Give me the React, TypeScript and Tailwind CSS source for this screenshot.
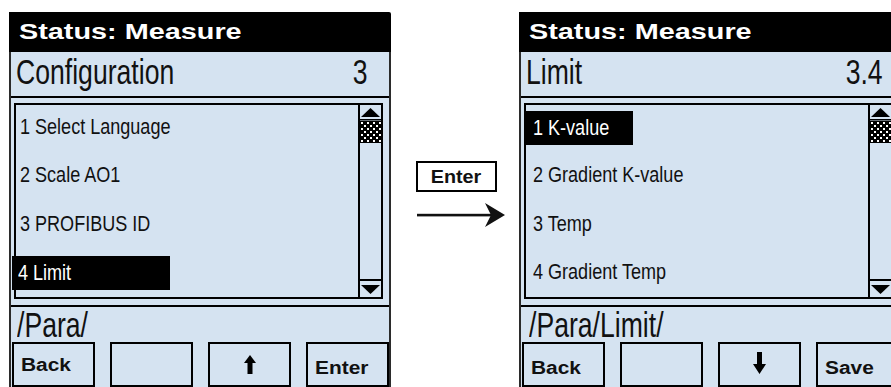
import React from "react";

const NARROW = "font-['Liberation_Sans',Arial,sans-serif] inline-block origin-left scale-x-[0.82]";
const TITLE = "font-['Liberation_Sans',Arial,sans-serif] inline-block origin-left scale-x-[0.76]";
const TITLE_R = "font-['Liberation_Sans',Arial,sans-serif] inline-block origin-right scale-x-[0.76]";
const BOLD = "font-['Liberation_Sans',Arial,sans-serif] font-bold";

function ScrollBar() {
  return (
    <div className="w-[23px] h-full border-l-2 border-black shrink-0">
      <svg width="21" height="192" viewBox="0 0 21 192" className="block">
        <defs>
          <pattern id="chk" x="0" y="16" width="6" height="6" patternUnits="userSpaceOnUse">
            <rect width="6" height="6" fill="#000" />
            <rect x="1" y="1" width="2" height="2" fill="#fff" />
            <rect x="4" y="4" width="2" height="2" fill="#fff" />
          </pattern>
        </defs>
        <polygon points="1,12 20,12 10.5,3" fill="#000" />
        <rect x="0" y="14" width="21" height="1.5" fill="#000" />
        <rect x="0" y="16" width="21" height="22" fill="url(#chk)" />
        <rect x="0" y="174" width="21" height="2" fill="#000" />
        <polygon points="1,180 20,180 10.5,189" fill="#000" />
      </svg>
    </div>
  );
}

function UpArrow() {
  return (
    <svg width="12" height="19" viewBox="0 0 12 19">
      <path d="M6 0 L12 8 L8.5 8 L8.5 19 L3.5 19 L3.5 8 L0 8 Z" fill="#000" />
    </svg>
  );
}

function DownArrow() {
  return (
    <svg width="13" height="22" viewBox="0 0 13 22">
      <path d="M4 0 L9 0 L9 12 L13 12 L6.5 22 L0 12 L4 12 Z" fill="#000" />
    </svg>
  );
}

type PanelProps = {
  title: string;
  num: string;
  items: string[];
  selected: number;
  path: string;
  buttons: React.ReactNode[];
  left: boolean;
};

function Panel({ title, num, items, selected, path, buttons, left }: PanelProps) {
  return (
    <div className="w-[382px] shrink-0 flex flex-col">
      <div className="h-[40px] bg-black rounded-tr-[2px] flex items-center pl-[10px]">
        <span className={`${BOLD} text-white text-[22px] leading-none inline-block origin-left scale-x-[1.31]`}>
          Status: Measure
        </span>
      </div>
      <div className="bg-[#d5e3f1] border-x-2 border-[#2b2b2b] flex flex-col">
        <div className={`h-[46px] border-b-2 border-black flex items-center justify-between pl-[5px] ${left ? "pr-[22px]" : "pr-[16px]"}`}>
          <span className={`${TITLE} text-[35px] leading-none text-[#111] pb-[5px]`}>{title}</span>
          <span className={`${TITLE_R} text-[35px] leading-none text-[#111] pb-[5px]`}>{num}</span>
        </div>
        <div className="h-[209px] border-b-2 border-black pt-[5px] pl-[3px] pr-[6px] pb-[6px]">
          <div className="h-[196px] border-2 border-black flex">
            <div className="flex-1 flex flex-col -mt-[1px]">
              {items.map((it, i) => (
                <div key={it} className="h-[49px] flex items-center">
                  {i === selected ? (
                    <div
                      className={`h-[34px] bg-black flex items-center ${
                        left ? "-ml-[4px] w-[158px] pl-[6px]" : "w-[107px] pl-[7px]"
                      }`}
                    >
                      <span className={`${NARROW} text-[22px] leading-none text-white`}>{it}</span>
                    </div>
                  ) : (
                    <div className={left ? "pl-[4px]" : "pl-[7px]"}>
                      <span className={`${NARROW} text-[22px] leading-none text-[#111]`}>{it}</span>
                    </div>
                  )}
                </div>
              ))}
            </div>
            <ScrollBar />
          </div>
        </div>
        <div className="h-[80px] flex flex-col">
          <div className={`h-[43px] flex items-center ${left ? "pl-[6px]" : "pl-[8px]"}`}>
            <span className={`${TITLE} text-[35px] leading-none text-[#111]`}>{path}</span>
          </div>
          <div className="flex gap-[15px] pl-[1px]">
            {buttons.map((b, i) => (
              <div key={i} className="w-[83px] h-[45px] border-2 border-black">
                {b}
              </div>
            ))}
          </div>
        </div>
      </div>
    </div>
  );
}

function BtnText({ t, top }: { t: string; top: string }) {
  return (
    <div className={`pl-[7px] ${top}`}>
      <span className={`${BOLD} text-[18px] leading-none text-[#111] inline-block origin-left scale-x-[1.16]`}>{t}</span>
    </div>
  );
}

export default function App() {
  const leftButtons = [
    <BtnText key="b" t="Back" top="pt-[9px]" />,
    <div key="e" />,
    <div key="u" className="flex justify-center pt-[11px]">
      <UpArrow />
    </div>,
    <BtnText key="en" t="Enter" top="pt-[12px]" />,
  ];
  const rightButtons = [
    <BtnText key="b" t="Back" top="pt-[12px]" />,
    <div key="e" />,
    <div key="d" className="flex justify-center pt-[8px]">
      <DownArrow />
    </div>,
    <BtnText key="s" t="Save" top="pt-[12px]" />,
  ];
  return (
    <div className="w-[891px] h-[387px] bg-white overflow-hidden flex pt-[12px] pl-[9px]">
      <Panel
        left
        title="Configuration"
        num="3"
        items={["1 Select Language", "2 Scale AO1", "3 PROFIBUS ID", "4 Limit"]}
        selected={3}
        path="/Para/"
        buttons={leftButtons}
      />
      <div className="w-[128px] shrink-0 flex flex-col items-start pl-[25px] pt-[149px]">
        <div className="w-[81px] h-[31px] border-2 border-black flex items-center justify-center">
          <span className={`${BOLD} text-[18px] leading-none text-[#111] inline-block scale-x-[1.1]`}>Enter</span>
        </div>
        <svg width="92" height="26" viewBox="0 0 92 26" className="mt-[10px] -ml-[1px]">
          <rect x="2" y="11.8" width="74" height="2.6" fill="#111" />
          <path d="M90 13 L70 1 L76 13 L70 25 Z" fill="#111" />
        </svg>
      </div>
      <Panel
        left={false}
        title="Limit"
        num="3.4"
        items={["1 K-value", "2 Gradient K-value", "3 Temp", "4 Gradient Temp"]}
        selected={0}
        path="/Para/Limit/"
        buttons={rightButtons}
      />
    </div>
  );
}
